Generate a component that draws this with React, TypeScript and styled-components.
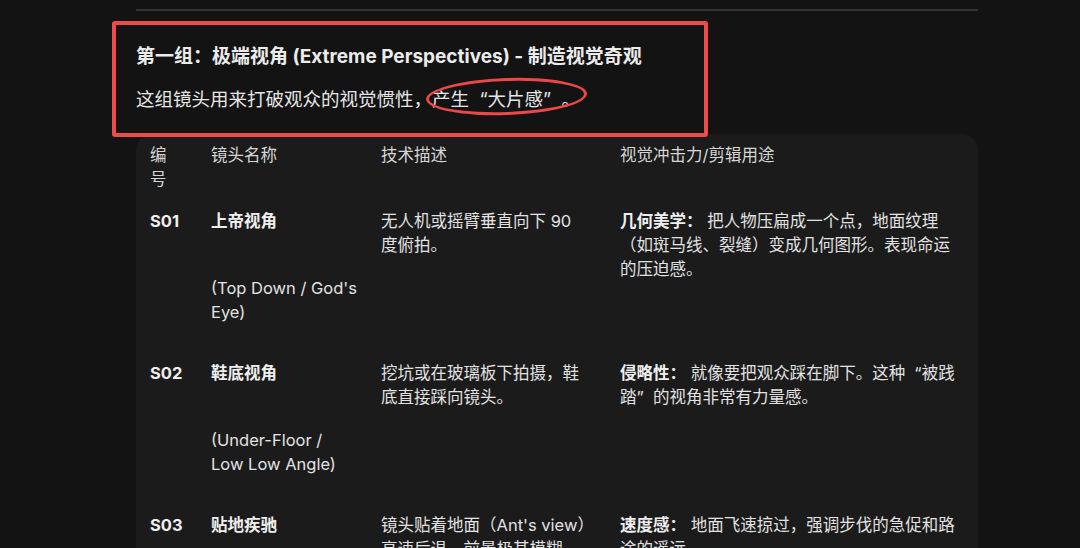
import type { ReactNode } from "react";
import styled, { createGlobalStyle } from "styled-components";

const GlobalStyle = createGlobalStyle`
  html, body {
    margin: 0;
    padding: 0;
    overflow: hidden;
    background-color: #131313;
  }
  body {
    font-family: Inter, "Noto Sans CJK SC", sans-serif;
    color: #e4e4e4;
  }
`;

const Page = styled.div`
  display: flex;
  flex-direction: column;
  width: 842px;
  padding: 9px 0 0 136px;
`;

const Rule = styled.div`
  height: 2px;
  background-color: #333333;
`;

const Intro = styled.div`
  position: relative;
  display: flex;
  flex-direction: column;
  gap: 14px;
  margin-top: 10px;
  padding: 22px 0 21px 0;
`;

const Frame = styled.div`
  position: absolute;
  top: 0;
  left: -24px;
  width: 596px;
  height: 116px;
  box-sizing: border-box;
  border: 4px solid #f04b4b;
  border-radius: 3px;
  z-index: 2;
  pointer-events: none;
`;

const Heading = styled.h3`
  margin: 0;
  font-size: 19px;
  line-height: 28px;
  font-weight: 700;
  color: #ececec;
`;

const Lead = styled.p`
  margin: 0;
  height: 28px;
  font-size: 18.5px;
  line-height: 28px;
  color: #e6e6e6;
`;

const Highlight = styled.span`
  position: relative;
  display: inline-block;
  line-height: 28px;
  vertical-align: top;
`;

const Ellipse = styled.span`
  position: absolute;
  top: -7px;
  bottom: -2px;
  left: -6px;
  right: -7px;
  border: 3px solid #ec4848;
  border-radius: 50%;
  transform: rotate(-2deg);
  pointer-events: none;
`;

// chinese quotes take a full em box, mark hugging the quoted word
const Quote = styled.span<{ $close?: boolean }>`
  display: inline-block;
  width: 1em;
  text-align: ${(p) => (p.$close ? "left" : "right")};
`;

const Card = styled.div`
  display: flex;
  flex-direction: column;
  background-color: #1b1b1b;
  border-radius: 16px;
  padding-left: 14px;
`;

const Row = styled.div<{ $head?: boolean }>`
  display: grid;
  grid-template-columns: 61px 170px 239px 1fr;
  padding: 9px 0 ${(p) => (p.$head ? "9px" : "28px")} 0;
  font-size: 16.5px;
  line-height: 24px;
  color: ${(p) => (p.$head ? "#d6d6d6" : "#e2e2e2")};
`;

const Cell = styled.div<{ $pr: number }>`
  padding-right: ${(p) => p.$pr}px;
`;

const Strong = styled.span`
  font-weight: 700;
  color: #efefef;
`;

const Alt = styled.div`
  margin-top: 43px;
`;

const AltLine = styled.div`
  white-space: nowrap;
`;

type Shot = {
  id: string;
  name: string;
  alt: string[];
  tech: string;
  label: string;
  effect: ReactNode;
};

const shots: Shot[] = [
  {
    id: "S01",
    name: "上帝视角",
    alt: ["(Top Down / God's", "Eye)"],
    tech: "无人机或摇臂垂直向下 90 度俯拍。",
    label: "几何美学：",
    effect: "把人物压扁成一个点，地面纹理（如斑马线、裂缝）变成几何图形。表现命运的压迫感。",
  },
  {
    id: "S02",
    name: "鞋底视角",
    alt: ["(Under-Floor /", "Low Low Angle)"],
    tech: "挖坑或在玻璃板下拍摄，鞋底直接踩向镜头。",
    label: "侵略性：",
    effect: (
      <>
        就像要把观众踩在脚下。这种<Quote>“</Quote>被践踏<Quote $close>”</Quote>的视角非常有力量感。
      </>
    ),
  },
  {
    id: "S03",
    name: "贴地疾驰",
    alt: ["(Ground Level", "Tracking)"],
    tech: "镜头贴着地面（Ant's view）高速后退，前景极其模糊。",
    label: "速度感：",
    effect: "地面飞速掠过，强调步伐的急促和路途的遥远。",
  },
];

const widths = [29, 15, 34, 18];

export default function App() {
  return (
    <>
      <GlobalStyle />
      <Page>
        <Rule />
        <Intro>
          <Frame />
          <Heading>第一组：极端视角 (Extreme Perspectives) - 制造视觉奇观</Heading>
          <Lead>
            这组镜头用来打破观众的视觉惯性，
            <Highlight>
              产生<Quote>“</Quote>大片感<Quote $close>”</Quote>。
              <Ellipse />
            </Highlight>
          </Lead>
        </Intro>
        <Card>
          <Row $head>
            <Cell $pr={widths[0]}>编号</Cell>
            <Cell $pr={widths[1]}>镜头名称</Cell>
            <Cell $pr={widths[2]}>技术描述</Cell>
            <Cell $pr={widths[3]}>视觉冲击力/剪辑用途</Cell>
          </Row>
          {shots.map((s) => (
            <Row key={s.id}>
              <Cell $pr={widths[0]}>
                <Strong>{s.id}</Strong>
              </Cell>
              <Cell $pr={widths[1]}>
                <Strong>{s.name}</Strong>
                <Alt>
                  {s.alt.map((line) => (
                    <AltLine key={line}>{line}</AltLine>
                  ))}
                </Alt>
              </Cell>
              <Cell $pr={widths[2]}>{s.tech}</Cell>
              <Cell $pr={widths[3]}>
                <Strong>{s.label}</Strong> {s.effect}
              </Cell>
            </Row>
          ))}
        </Card>
      </Page>
    </>
  );
}
